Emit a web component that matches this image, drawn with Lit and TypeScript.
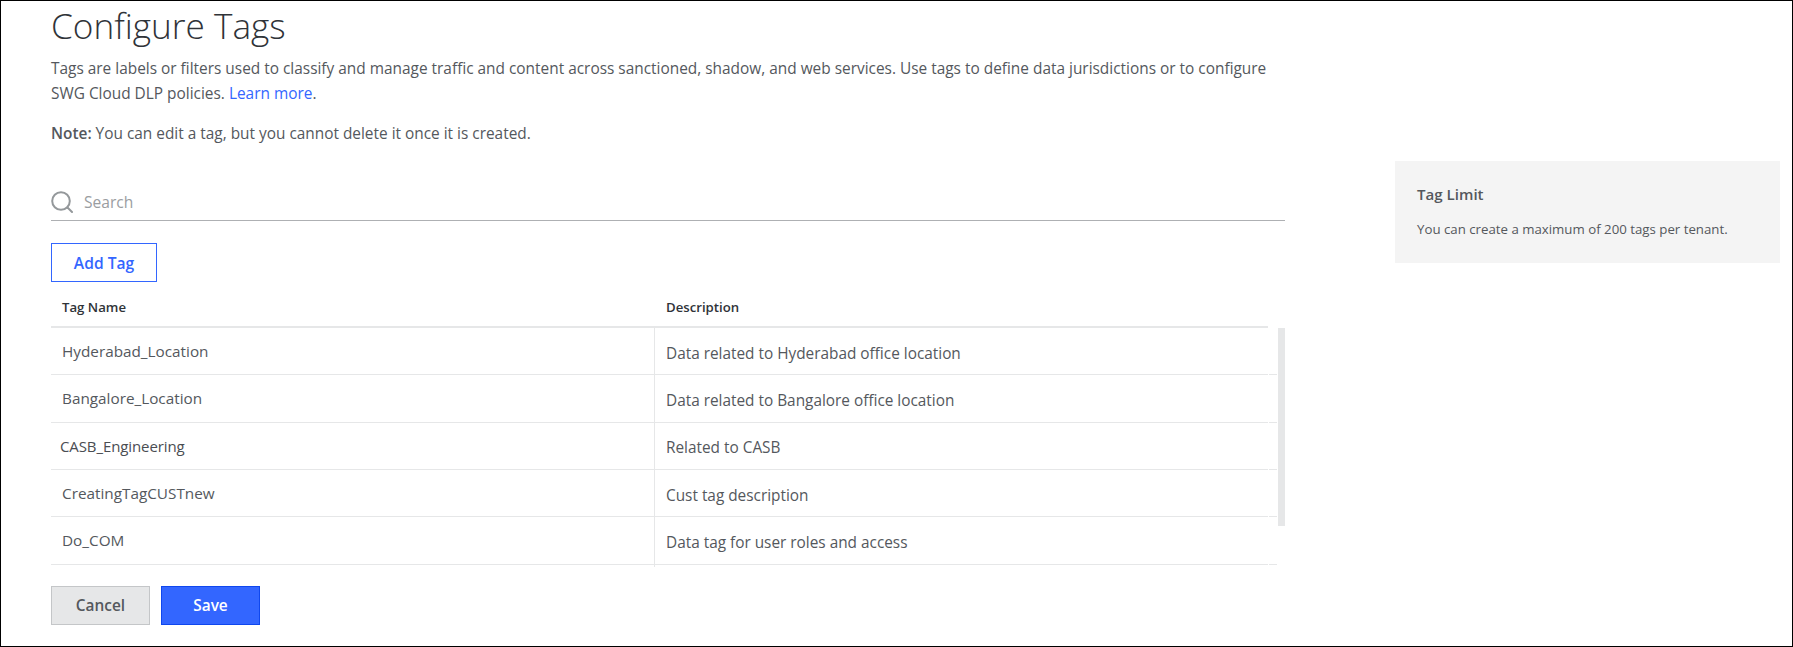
import { LitElement, html, css } from "lit";
import { customElement } from "lit/decorators.js";

const rows = [
  { name: "Hyderabad_Location", desc: "Data related to Hyderabad office location" },
  { name: "Bangalore_Location", desc: "Data related to Bangalore office location" },
  { name: "CASB_Engineering", desc: "Related to CASB", odd: true },
  { name: "CreatingTagCUSTnew", desc: "Cust tag description" },
  { name: "Do_COM", desc: "Data tag for user roles and access" },
  { name: "", desc: "" },
];

@customElement("app-root")
export class AppRoot extends LitElement {
  static styles = css`
    :host {
      display: block;
      width: 1793px;
      height: 647px;
      box-sizing: border-box;
      border: 1px solid #000;
      background: #fff;
      font-family: "Open Sans", sans-serif;
      color: #54585d;
      overflow: hidden;
    }
    .page {
      display: grid;
      grid-template-columns: 1234px 385px;
      column-gap: 110px;
      padding-left: 50px;
    }
    .title {
      margin: 1px 0 0;
      font-size: 35.2px;
      font-weight: 300;
      line-height: 46px;
      height: 47px;
      color: #2f3338;
    }
    .intro {
      margin: 7px 0 0;
      width: 1225px;
      font-size: 15.42px;
      line-height: 25px;
    }
    .note {
      margin: 15px 0 0;
      font-size: 15.4px;
      line-height: 25px;
    }
    .note b { font-weight: 600; }
    a { color: #3366ff; text-decoration: none; }
    .search {
      margin-top: 35px;
      height: 37px;
      padding-top: 2px;
      display: flex;
      align-items: center;
      gap: 11px;
      border-bottom: 1px solid #aeb0b3;
      box-sizing: content-box;
    }
    .search svg { display: block; width: 22px; height: 22px; flex: none; }
    .search span { font-size: 15.6px; color: #9a9da1; }
    .add {
      margin-top: 22px;
      display: flex;
      width: 106px;
      height: 39px;
      box-sizing: border-box;
      border: 1px solid #3366ff;
      align-items: center;
      justify-content: center;
      color: #3366ff;
      font-size: 15.6px;
      font-weight: 600;
      background: #fff;
    }
    .head {
      width: 1217px;
      height: 46px;
      padding-top: 6px;
      box-sizing: border-box;
      border-bottom: 2px solid #e6e7e8;
      display: grid;
      grid-template-columns: 604px 1fr;
      align-items: center;
      font-size: 13.2px;
      font-weight: 600;
      color: #2f3338;
    }
    .head span { padding-left: 11px; }
    .table { display: flex; height: 239px; overflow: hidden; }
    .rows { width: 1227px; flex: none; }
    .row {
      display: grid;
      grid-template-columns: 603px 614px 9px;
      height: 47.33px;
      font-size: 15.36px;
    }
    .cell { border-bottom: 1px solid #e6e7e8; display: flex; align-items: center; box-sizing: border-box; }
    .name { padding: 0 0 1px 11px; font-size: 15.3px; }
    .name.odd { padding: 1px 0 0 9px; color: #4a4d52; font-size: 15px; letter-spacing: -0.1px; }
    .desc { border-left: 1px solid #e6e7e8; padding: 4px 0 0 11px; }
    .tail { margin-left: 1px; }
    .bar { width: 7px; height: 198px; background: #e6e7e8; }
    .actions { margin-top: 19px; display: flex; gap: 11px; }
    .btn {
      width: 99px;
      height: 39px;
      box-sizing: border-box;
      display: flex;
      align-items: center;
      justify-content: center;
      font-size: 15.4px;
      font-weight: 600;
    }
    .cancel { background: #e6e7e8; border: 1px solid #c4c6c8; color: #54585d; }
    .save { background: #3366ff; border: 1px solid #0f47ee; color: #fff; }
    .panel {
      margin-top: 160px;
      height: 102px;
      box-sizing: border-box;
      padding: 22px 22px 0;
      background: #f4f4f4;
    }
    .panel h2 { margin: 0; font-size: 15.1px; line-height: 22px; font-weight: 600; color: #54585d; }
    .panel p { margin: 14px 0 0; font-size: 13.25px; line-height: 20px; }
  `;

  render() {
    return html`
      <div class="page">
        <div>
          <h1 class="title">Configure Tags</h1>
          <p class="intro">Tags are labels or filters used to classify and manage traffic and content across sanctioned, shadow, and web services. Use tags to define data jurisdictions or to configure SWG Cloud DLP policies. <a>Learn more</a>.</p>
          <p class="note"><b>Note:</b> You can edit a tag, but you cannot delete it once it is created.</p>
          <div class="search">
            <svg viewBox="0 0 22 22" fill="none" stroke="#94989b" stroke-width="2"><circle cx="10" cy="10" r="8.8"/><path d="M16.5 16.5 L21 21" stroke-linecap="round"/></svg>
            <span>Search</span>
          </div>
          <div class="add">Add Tag</div>
          <div class="head"><span>Tag Name</span><span>Description</span></div>
          <div class="table">
            <div class="rows">
              ${rows.map((r) => html`
                <div class="row">
                  <div class="cell name ${r.odd ? "odd" : ""}">${r.name}</div>
                  <div class="cell desc">${r.desc}</div>
                  <div class="cell tail"></div>
                </div>`)}
            </div>
            <div class="bar"></div>
          </div>
          <div class="actions">
            <div class="btn cancel">Cancel</div>
            <div class="btn save">Save</div>
          </div>
        </div>
        <aside class="panel">
          <h2>Tag Limit</h2>
          <p>You can create a maximum of 200 tags per tenant.</p>
        </aside>
      </div>
    `;
  }
}
